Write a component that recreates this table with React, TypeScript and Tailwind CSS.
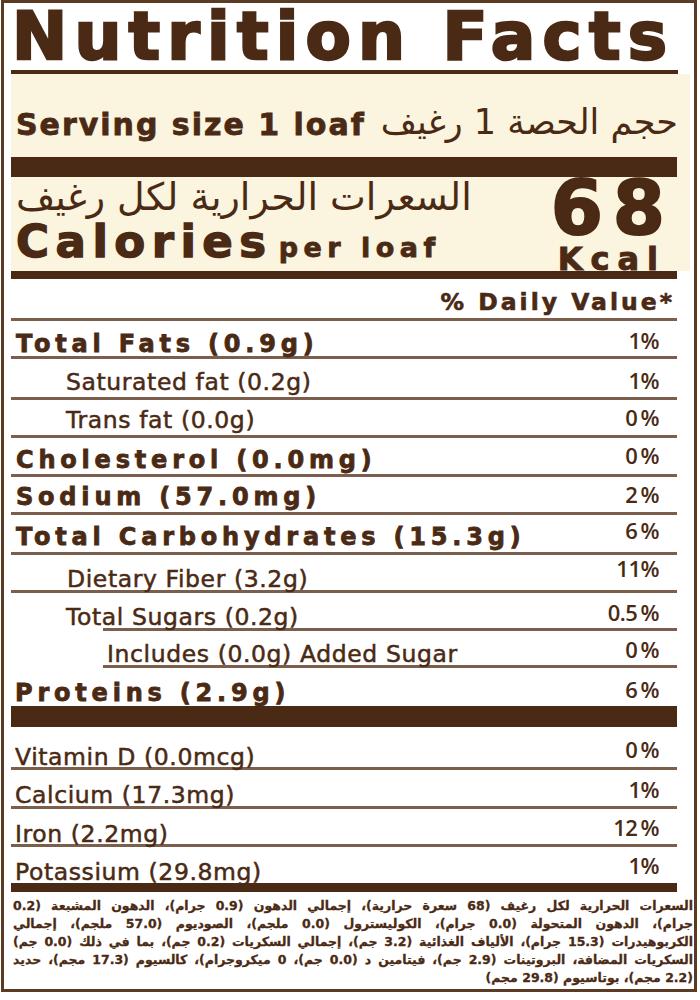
import React from 'react';

type Kind = 'bold' | 'sub';
type LineKind = 'thin' | 'indent' | 'thick21' | 'thick9';
interface Row {
  label: string;
  pct: string;
  kind: Kind;
  x: string;
  h: string;
  mt: string;
  pmt: string;
  line: LineKind;
}

const rows: Row[] = [
  { label: 'Total Fats (0.9g)', pct: '1%', kind: 'bold', x: 'pl-[5px]', h: 'h-[35px]', mt: 'mt-[11px]', pmt: 'mt-[8px]', line: 'thin' },
  { label: 'Saturated fat (0.2g)', pct: '1%', kind: 'sub', x: 'pl-[55px]', h: 'h-[38px]', mt: 'mt-[11px]', pmt: 'mt-[10px]', line: 'thin' },
  { label: 'Trans fat (0.0g)', pct: '0\u2009%', kind: 'sub', x: 'pl-[55px]', h: 'h-[35px]', mt: 'mt-[8px]', pmt: 'mt-[6px]', line: 'thin' },
  { label: 'Cholesterol (0.0mg)', pct: '0\u2009%', kind: 'bold', x: 'pl-[5px]', h: 'h-[36px]', mt: 'mt-[10px]', pmt: 'mt-[6px]', line: 'thin' },
  { label: 'Sodium (57.0mg)', pct: '2\u2009%', kind: 'bold', x: 'pl-[5px]', h: 'h-[35px]', mt: 'mt-[8px]', pmt: 'mt-[6px]', line: 'thin' },
  { label: 'Total Carbohydrates (15.3g)', pct: '6\u2009%', kind: 'bold', x: 'pl-[5px]', h: 'h-[37px]', mt: 'mt-[10px]', pmt: 'mt-[4px]', line: 'thin' },
  { label: 'Dietary Fiber (3.2g)', pct: '11%', kind: 'sub', x: 'pl-[56px]', h: 'h-[35px]', mt: 'mt-[12px]', pmt: 'mt-[2px]', line: 'thin' },
  { label: 'Total Sugars (0.2g)', pct: '0.5\u2009%', kind: 'sub', x: 'pl-[55px]', h: 'h-[35px]', mt: 'mt-[12px]', pmt: 'mt-[8px]', line: 'indent' },
  { label: 'Includes (0.0g) Added Sugar', pct: '0\u2009%', kind: 'sub', x: 'pl-[96px]', h: 'h-[34px]', mt: 'mt-[11px]', pmt: 'mt-[7px]', line: 'indent' },
  { label: 'Proteins (2.9g)', pct: '6\u2009%', kind: 'bold', x: 'pl-[4px]', h: 'h-[38px]', mt: 'mt-[13px]', pmt: 'mt-[10px]', line: 'thick21' },
  { label: 'Vitamin D (0.0mcg)', pct: '0\u2009%', kind: 'sub', x: 'pl-[4px]', h: 'h-[40px]', mt: 'mt-[18px]', pmt: 'mt-[11px]', line: 'thin' },
  { label: 'Calcium (17.3mg)', pct: '1%', kind: 'sub', x: 'pl-[4px]', h: 'h-[36px]', mt: 'mt-[13px]', pmt: 'mt-[8px]', line: 'thin' },
  { label: 'Iron (2.2mg)', pct: '12\u2009%', kind: 'sub', x: 'pl-[4px]', h: 'h-[35px]', mt: 'mt-[13px]', pmt: 'mt-[7px]', line: 'thin' },
  { label: 'Potassium (29.8mg)', pct: '1%', kind: 'sub', x: 'pl-[4px]', h: 'h-[36px]', mt: 'mt-[13px]', pmt: 'mt-[7px]', line: 'thick9' },
];

const BOLD = "font-bold text-[24px] leading-[24px] tracking-[4.8px] [-webkit-text-stroke:0.8px_#4a2a14]";
const SUB = "font-normal text-[23.5px] leading-[24px] tracking-[0.6px] [-webkit-text-stroke:0.5px_#4a2a14]";

function Line({ kind }: { kind: LineKind }) {
  if (kind === 'thin') return <div className="w-[666px] h-[3px] bg-[#7b5e4b]" />;
  if (kind === 'indent') return <div className="ml-[92px] w-[574px] h-[3px] bg-[#7b5e4b]" />;
  if (kind === 'thick21') return <div className="w-[666px] h-[21px] bg-[#4a2a14]" />;
  return <div className="w-[666px] h-[9px] bg-[#4a2a14]" />;
}

const footer = [
  'السعرات الحرارية لكل رغيف (68 سعرة حرارية)، إجمالي الدهون (0.9 جرام)، الدهون المشبعة (0.2',
  'جرام)، الدهون المتحولة (0.0 جرام)، الكوليسترول (0.0 ملجم)، الصوديوم (57.0 ملجم)، إجمالي',
  'الكربوهيدرات (15.3 جرام)، الألياف الغذائية (3.2 جم)، إجمالي السكريات (0.2 جم)، بما في ذلك (0.0 جم)',
  'السكريات المضافة، البروتينات (2.9 جم)، فيتامين د (0.0 جم)، 0 ميكروجرام)، كالسيوم (17.3 مجم)، حديد',
];

export default function App() {
  return (
    <div className="w-[700px] h-[1000px] bg-white">
      <div className="ml-[1px] w-[696px] h-[992px] border-[3px] border-[#5c3b24] pl-[7px] text-[#4a2a14] font-['DejaVu_Sans',sans-serif]">
        {/* Title */}
        <div className="h-[67px] pt-[1px] pl-[1px]">
          <div className="text-[66px] leading-[66px] font-bold tracking-[7.2px] whitespace-nowrap [-webkit-text-stroke:2.5px_#4a2a14]">Nutrition Facts</div>
        </div>
        <div className="w-[667px] h-[4px] bg-[#4a2a14]" />

        {/* Cream header */}
        <div className="w-[679px] bg-[#fbf4de]">
          <div className="h-[83px] w-[667px] flex justify-between">
            <div className="mt-[36px] pl-[5px] text-[30px] leading-[30px] font-bold tracking-[2px] whitespace-nowrap [-webkit-text-stroke:0.8px_#4a2a14]">Serving size 1 loaf</div>
            <div dir="rtl" className="mt-[31px] text-[35px] leading-[35px] whitespace-nowrap">حجم الحصة 1 رغيف</div>
          </div>
          <div className="w-[666px] h-[20px] bg-[#4a2a14]" />
          <div className="h-[94px] w-[666px] flex justify-between">
            <div className="pl-[5px] flex flex-col">
              <div dir="rtl" className="mt-[2px] text-[38px] leading-[36px] whitespace-nowrap text-left">السعرات الحرارية لكل رغيف</div>
              <div className="mt-[4px] flex items-baseline whitespace-nowrap">
                <span className="text-[45px] leading-[45px] font-bold tracking-[6.5px] [-webkit-text-stroke:1.4px_#4a2a14]">Calories</span>
                <span className="ml-[6px] text-[27px] leading-[27px] font-bold tracking-[5.5px] [-webkit-text-stroke:0.8px_#4a2a14]">per loaf</span>
              </div>
            </div>
            <div className="mr-[2px] flex flex-col items-center">
              <div className="mt-[3px] text-[75px] leading-[56px] font-bold tracking-[10px] pl-[10px] [-webkit-text-stroke:2px_#4a2a14]">68</div>
              <div className="mt-[10px] text-[32px] leading-[26px] font-bold tracking-[8px] pl-[8px] [-webkit-text-stroke:1px_#4a2a14]">Kcal</div>
            </div>
          </div>
        </div>
        <div className="w-[666px] h-[8px] bg-[#4a2a14]" />

        {/* Daily value */}
        <div className="w-[666px] h-[39px] pt-[11px] pr-[2px] text-right">
          <span className="text-[23.5px] leading-[24px] font-bold tracking-[3px] whitespace-nowrap [-webkit-text-stroke:0.6px_#4a2a14]">% Daily Value*</span>
        </div>
        <Line kind="thin" />

        {rows.map((r) => (
          <div key={r.label}>
            <div className={`flex justify-between w-[666px] ${r.h}`}>
              <div className={`${r.x} ${r.mt} whitespace-nowrap ${r.kind === 'bold' ? BOLD : SUB}`}>{r.label}</div>
              <div className={`${r.pmt} pr-[18px] font-['Open_Sans',sans-serif] font-semibold text-[22px] leading-[22px] tracking-[-0.5px] whitespace-nowrap`}>{r.pct}</div>
            </div>
            <Line kind={r.line} />
          </div>
        ))}

        {/* Footer */}
        <div dir="rtl" className="ml-[2px] w-[680px] pt-[5px] font-bold text-[12.5px] leading-[18px] [-webkit-text-stroke:0.3px_#4a2a14]">
          {footer.map((t) => (
            <div key={t} className="text-justify [text-align-last:justify]">{t}</div>
          ))}
          <div className="text-right">(2.2 مجم)، بوتاسيوم (29.8 مجم)</div>
        </div>
      </div>
    </div>
  );
}
